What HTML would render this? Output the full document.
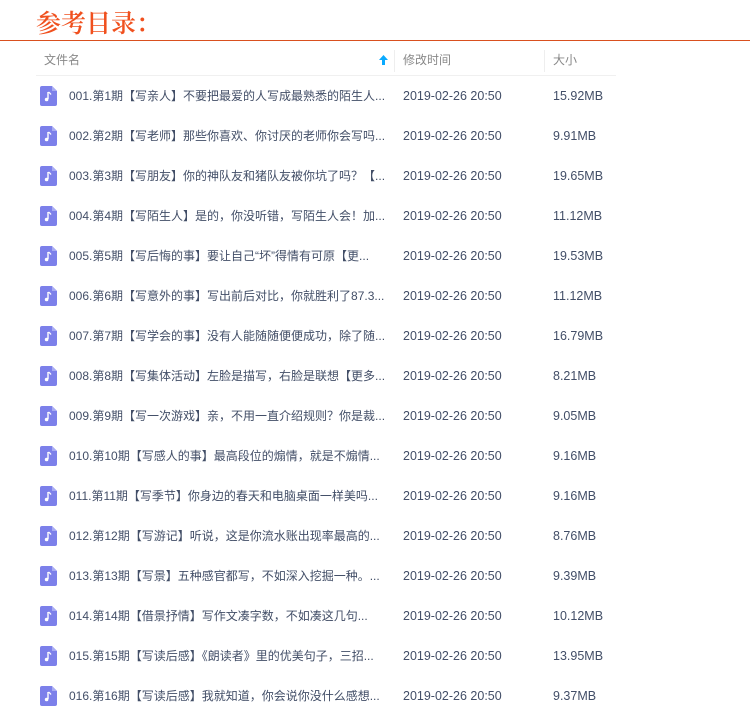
<!DOCTYPE html><html><head><meta charset="utf-8"><style>
body{margin:0;width:750px;height:725px;background:#fff;font-family:"Liberation Sans","Noto Sans CJK SC",sans-serif;overflow:hidden;position:relative}
.t{position:absolute;left:36px;top:5px;font-family:"Noto Serif CJK SC",serif;font-weight:600;font-size:25px;color:#f0501e;line-height:34px}
.hl{position:absolute;left:0;top:40px;width:750px;height:1px;background:#d9501f}
.hd{position:absolute;top:45px;height:30px;line-height:30px;font-size:12px;color:#888}
.sep{position:absolute;top:50px;width:1px;height:22px;background:#eee}
.hb{position:absolute;left:36px;top:75px;width:580px;height:1px;background:#f0f0f0}
.r{position:absolute;left:0;height:40px;width:750px;font-size:12px;color:#424e67;line-height:20px}
.ic{position:absolute;left:40px;top:10px;width:17px;height:20px}
.n{position:absolute;left:69px;top:10px}
.d{position:absolute;left:403px;top:10px;font-size:12.5px}
.s{position:absolute;left:553px;top:10px;font-size:12.5px}
</style></head><body>
<div class="t">参考目录：</div><div class="hl"></div>
<div class="hd" style="left:44px">文件名</div>
<svg style="position:absolute;left:379px;top:55px" width="9" height="10" viewBox="0 0 9 10"><path d="M4.5 0L9 5H6V10H3V5H0Z" fill="#09aaff"/></svg>
<div class="sep" style="left:394px"></div>
<div class="hd" style="left:403px">修改时间</div>
<div class="sep" style="left:544px"></div>
<div class="hd" style="left:553px">大小</div>
<div class="hb"></div>
<div id="rows"></div>
<script>
var d=[["001.第1期【写亲人】不要把最爱的人写成最熟悉的陌生人...","15.92MB"],["002.第2期【写老师】那些你喜欢、你讨厌的老师你会写吗...","9.91MB"],["003.第3期【写朋友】你的神队友和猪队友被你坑了吗？【...","19.65MB"],["004.第4期【写陌生人】是的，你没听错，写陌生人会！加...","11.12MB"],["005.第5期【写后悔的事】要让自己“坏”得情有可原【更...","19.53MB"],["006.第6期【写意外的事】写出前后对比，你就胜利了87.3...","11.12MB"],["007.第7期【写学会的事】没有人能随随便便成功，除了随...","16.79MB"],["008.第8期【写集体活动】左脸是描写，右脸是联想【更多...","8.21MB"],["009.第9期【写一次游戏】亲，不用一直介绍规则？你是裁...","9.05MB"],["010.第10期【写感人的事】最高段位的煽情，就是不煽情...","9.16MB"],["011.第11期【写季节】你身边的春天和电脑桌面一样美吗...","9.16MB"],["012.第12期【写游记】听说，这是你流水账出现率最高的...","8.76MB"],["013.第13期【写景】五种感官都写，不如深入挖掘一种。...","9.39MB"],["014.第14期【借景抒情】写作文凑字数，不如凑这几句...","10.12MB"],["015.第15期【写读后感】《朗读者》里的优美句子，三招...","13.95MB"],["016.第16期【写读后感】我就知道，你会说你没什么感想...","9.37MB"]];
var h="";d.forEach(function(x,i){h+='<div class="r" style="top:'+(76+i*40)+'px"><svg class="ic" viewBox="0 0 17 20"><path d="M2 0H12L17 5V18Q17 20 15 20H2Q0 20 0 18V2Q0 0 2 0Z" fill="#7c80ea"/><path d="M12 0V5H17Z" fill="#a9acf2"/><path d="M8 6V13" stroke="#fff" stroke-width="1.4"/><path d="M8.5 6Q10 7 11 8.5" stroke="#fff" stroke-width="1.3" fill="none"/><circle cx="6.6" cy="13.5" r="1.8" fill="#fff"/></svg><span class="n">'+x[0]+'</span><span class="d">2019-02-26 20:50</span><span class="s">'+x[1]+'</span></div>'});
document.getElementById("rows").innerHTML=h;
</script>
</body></html>
